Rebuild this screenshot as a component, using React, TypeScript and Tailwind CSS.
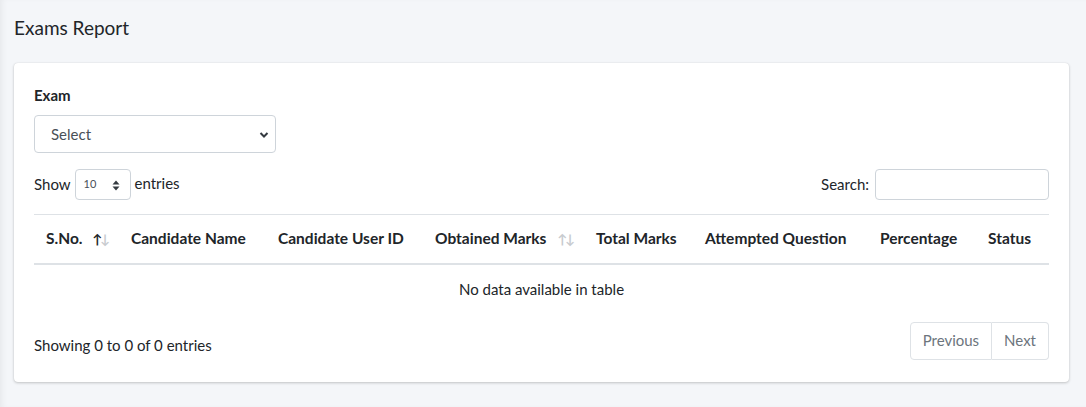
import React from "react";

const font = { fontFamily: "Lato, 'Noto Sans', sans-serif" };

function SortArrows({ active }: { active?: boolean }) {
  return (
    <span className="absolute right-[11px] top-1/2 -translate-y-1/2 flex text-[13px] font-bold leading-none tracking-[-2px]">
      <span className={active ? "text-[#212529]" : "text-[#c8cbcf]"}>↑</span>
      <span className="text-[#c8cbcf]">↓</span>
    </span>
  );
}

export default function App() {
  const cols: { label: string; w: number; sort?: "active" | "idle" }[] = [
    { label: "S.No.", w: 85, sort: "active" },
    { label: "Candidate Name", w: 147 },
    { label: "Candidate User ID", w: 157 },
    { label: "Obtained Marks", w: 161, sort: "idle" },
    { label: "Total Marks", w: 109 },
    { label: "Attempted Question", w: 175 },
    { label: "Percentage", w: 108 },
    { label: "Status", w: 73 },
  ];
  return (
    <div
      className="min-h-[407px] w-full bg-[#f4f6f9] text-[#212529] shadow-[inset_5px_0_6px_-3px_rgba(0,0,0,0.06)]"
      style={font}
    >
      <div className="px-[14px] pt-[14px]">
        <h1 className="text-[19px] leading-[28px] text-[#212529]">Exams Report</h1>
        <div className="mt-[21px] w-[1055px] rounded-[4px] bg-white shadow-[0_0_1px_rgba(0,0,0,0.125),0_1px_3px_rgba(0,0,0,0.2)] px-[20px] pt-[22px] pb-[22px]">
          <label className="block text-[15px] font-bold leading-[20px]">Exam</label>
          <div className="mt-[10px] relative w-[242px] h-[38px] rounded-[4px] border border-[#ced4da] flex items-center pl-[16px] text-[15px] text-[#495057]">
            Select
            <svg className="absolute right-[6px] top-[15px]" width="10" height="8" viewBox="0 0 10 8">
              <path d="M1.5 2 L5 5.5 L8.5 2" fill="none" stroke="#343a40" strokeWidth="2" />
            </svg>
          </div>
          <div className="mt-[16px] flex items-center justify-between h-[31px]">
            <div className="flex items-center text-[15px]">
              <span>Show</span>
              <div className="ml-[4px] mr-[4px] relative w-[56px] h-[31px] rounded-[4px] border border-[#ced4da] flex items-center pl-[8px] text-[11px] text-[#495057]">
                10
                <svg className="absolute right-[10px] top-[10px]" width="8" height="11" viewBox="0 0 8 11">
                  <path d="M0.5 4.5 L4 0.5 L7.5 4.5 Z" fill="#343a40" />
                  <path d="M0.5 6.5 L4 10.5 L7.5 6.5 Z" fill="#343a40" />
                </svg>
              </div>
              <span className="-mt-[2px]">entries</span>
            </div>
            <div className="flex items-center text-[15px]">
              <span className="mr-[6px]">Search:</span>
              <div className="w-[174px] h-[31px] rounded-[4px] border border-[#ced4da]" />
            </div>
          </div>
          <table className="mt-[14px] w-[1015px] table-fixed border-collapse">
            <colgroup>
              {cols.map((c) => (
                <col key={c.label} style={{ width: c.w }} />
              ))}
            </colgroup>
            <thead>
              <tr className="border-t border-[#dee2e6] border-b-2 border-b-[#dee2e6]">
                {cols.map((c) => (
                  <th
                    key={c.label}
                    className="relative h-[49px] px-[12px] text-left text-[15.5px] font-bold whitespace-nowrap"
                  >
                    {c.label}
                    {c.sort && <SortArrows active={c.sort === "active"} />}
                  </th>
                ))}
              </tr>
            </thead>
            <tbody>
              <tr>
                <td colSpan={8} className="h-[51px] text-center text-[15px]">
                  No data available in table
                </td>
              </tr>
            </tbody>
          </table>
          <div className="mt-[7px] flex items-center justify-between">
            <div className="text-[15px] pt-[10px]">Showing 0 to 0 of 0 entries</div>
            <div className="flex h-[38px] text-[15px] text-[#6c757d]">
              <div className="flex items-center px-[12px] border border-[#dee2e6] rounded-l-[4px]">Previous</div>
              <div className="flex items-center px-[12px] border border-l-0 border-[#dee2e6] rounded-r-[4px]">Next</div>
            </div>
          </div>
        </div>
      </div>
    </div>
  );
}
